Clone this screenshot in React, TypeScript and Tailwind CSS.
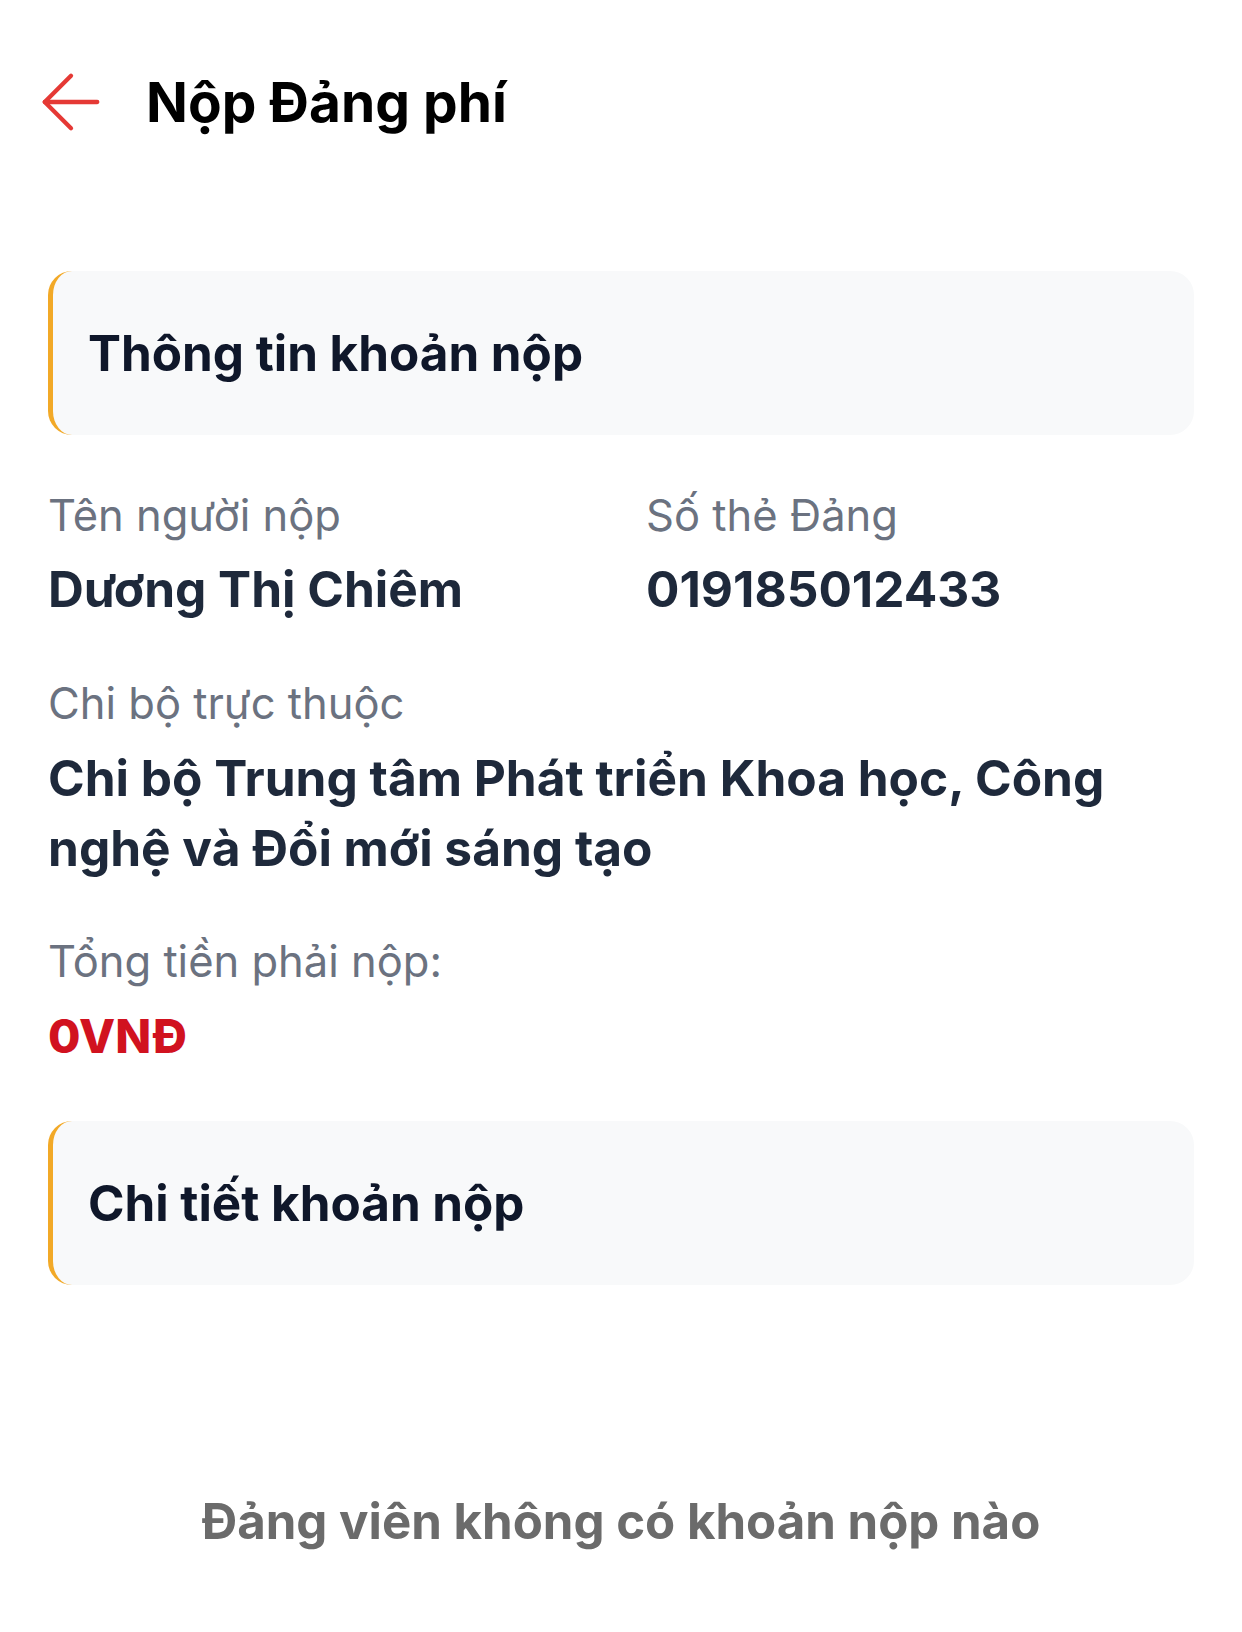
import { ArrowLeft } from "lucide-react"

// section header card with the amber left edge
function SectionCard({ title }: { title: string }) {
    return (
        <div className="h-[164px] flex items-center rounded-[24px] border-l-[5px] border-[#f2a927] bg-[#f8f9fa] pl-[35px]">
            <h2 className="text-[49.4px] leading-[64px] font-bold text-[#0f172a]">{title}</h2>
        </div>
    )
}

function Field({ label, value, gap = "gap-[10px]" }: { label: string; value: string; gap?: string }) {
    return (
        <div className={`flex flex-col ${gap}`}>
            <span className="text-[43.5px] leading-[58px] text-[#6b7280]">{label}</span>
            <span className="text-[49.6px] leading-[70px] font-bold text-[#1e293b]">{value}</span>
        </div>
    )
}

export default function App() {
    return (
        <div
            className="w-[1242px] h-[1632px] bg-white flex flex-col px-[48px] overflow-hidden"
            style={{ fontFamily: "Inter, 'Noto Sans', sans-serif" }}
        >
            {/* Header */}
            <div className="h-[204px] flex items-center gap-[30px]">
                <ArrowLeft className="w-[90px] h-[90px] text-[#e53935] -ml-[22px]" strokeWidth={1.15} />
                <h1 className="text-[55px] leading-[70px] font-bold text-black">Nộp Đảng phí</h1>
            </div>

            <div className="mt-[67px]">
                <SectionCard title="Thông tin khoản nộp" />
            </div>

            <div className="mt-[51px] grid grid-cols-[598px_1fr]">
                <Field label="Tên người nộp" value="Dương Thị Chiêm" />
                <Field label="Số thẻ Đảng" value="019185012433" />
            </div>

            <div className="mt-[50px]">
                <Field
                    label="Chi bộ trực thuộc"
                    gap="gap-[11px]"
                    value="Chi bộ Trung tâm Phát triển Khoa học, Công nghệ và Đổi mới sáng tạo"
                />
            </div>

            <div className="mt-[49px] flex flex-col gap-[16px]">
                <span className="text-[43.5px] leading-[58px] text-[#6b7280]">Tổng tiền phải nộp:</span>
                <span className="text-[47px] leading-[60px] font-extrabold text-[#d1121f]">0VNĐ</span>
            </div>

            <div className="mt-[55px]">
                <SectionCard title="Chi tiết khoản nộp" />
            </div>

            <p className="mt-[206px] text-center text-[49.2px] leading-[60px] font-bold text-[#6b6b6b]">
                Đảng viên không có khoản nộp nào
            </p>
        </div>
    )
}
